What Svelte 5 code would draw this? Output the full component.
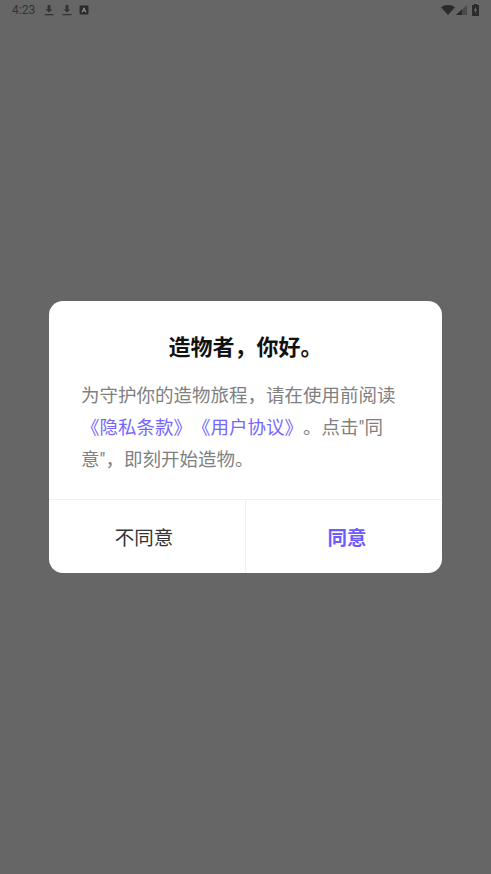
<script>
  const title = "造物者，你好。";
</script>

<div class="screen">
  <div class="status">
    <div class="status-left">
      <span class="time">4:23</span>
      <svg class="dl" viewBox="0 0 12 12" width="12" height="12"><path d="M4.6 1h2.8v4.2h2L6 8.6 2.6 5.2h2zM1.5 10h9v1.2h-9z" fill="#333" /></svg>
      <svg class="dl" viewBox="0 0 12 12" width="12" height="12"><path d="M4.6 1h2.8v4.2h2L6 8.6 2.6 5.2h2zM1.5 10h9v1.2h-9z" fill="#333" /></svg>
      <svg class="dl" viewBox="0 0 10 10" width="10" height="10"><rect x="0.5" y="0.5" width="9" height="9" rx="1" fill="#2b2b2b" /><path d="M3 7.4 5 2.8l2 4.6M3.8 5.9h2.4" stroke="#999" stroke-width="1" fill="none" /></svg>
    </div>
    <div class="status-right">
      <svg viewBox="0 0 14 10" width="14" height="10"><path d="M0 2.2C2 .8 4.4 0 7 0s5 .8 7 2.2L7 10z" fill="#2b2b2b" /></svg>
      <svg viewBox="0 0 11 10" width="11" height="10"><path d="M11 0v10H0z" fill="#4a4a4a" /><path d="M6 4.5V10H0z" fill="#2b2b2b" /></svg>
      <svg viewBox="0 0 7 12" width="7" height="12"><path d="M2 0h3v1h2v11H0V1h2z" fill="#2b2b2b" /><path d="M4 2.5 2 6.5h1.4L3 9.5l2-4H3.6z" fill="#777" /></svg>
    </div>
  </div>

  <div class="dialog">
    <div class="content">
      <h2>{title}</h2>
      <p>
        为守护你的造物旅程，请在使用前阅读<br />
        <span class="link">《隐私条款》《用户协议》</span>。点击"同<br />
        意"，即刻开始造物。
      </p>
    </div>
    <div class="actions">
      <button class="no">不同意</button>
      <button class="yes">同意</button>
    </div>
  </div>
</div>

<style>
  :global(body) {
    margin: 0;
    background: #666;
  }
  .screen {
    position: relative;
    height: 874px;
    background: #666;
    display: flex;
    align-items: center;
    justify-content: center;
    font-family: Roboto, "Noto Sans CJK SC", sans-serif;
    text-spacing-trim: space-all;
  }
  .status {
    position: absolute;
    top: 0;
    left: 0;
    right: 0;
    height: 19px;
    display: flex;
    justify-content: space-between;
    align-items: center;
    padding: 0 12px;
    box-sizing: border-box;
  }
  .status-left {
    display: flex;
    align-items: center;
    gap: 6px;
  }
  .status-right {
    display: flex;
    align-items: center;
    gap: 1px;
  }
  .status-right svg:last-child {
    margin-left: 4px;
  }
  .time {
    font-size: 12px;
    color: #333;
    margin-right: 2px;
  }
  .dialog {
    width: 393px;
    height: 272px;
    background: #fff;
    border-radius: 14px;
    display: flex;
    flex-direction: column;
    overflow: hidden;
  }
  .content {
    flex: 1;
    padding: 27px 32px 0;
  }
  h2 {
    margin: 0;
    font-size: 22px;
    line-height: 40px;
    font-weight: 700;
    color: #111;
    text-align: center;
  }
  p {
    margin: 12px 0 0;
    font-size: 18.5px;
    line-height: 32px;
    color: #808080;
    white-space: nowrap;
  }
  .link {
    color: #7466ff;
  }
  .actions {
    display: flex;
    height: 73px;
    border-top: 1px solid #f0f0f0;
  }
  button {
    flex: 1;
    border: 0;
    background: none;
    padding: 0;
    font-family: inherit;
    font-size: 19.5px;
  }
  .no {
    color: #333;
    border-right: 1px solid #f0f0f0;
    padding-right: 6px;
  }
  .yes {
    color: #6c5cff;
    font-weight: 700;
    padding-left: 6px;
  }
</style>
